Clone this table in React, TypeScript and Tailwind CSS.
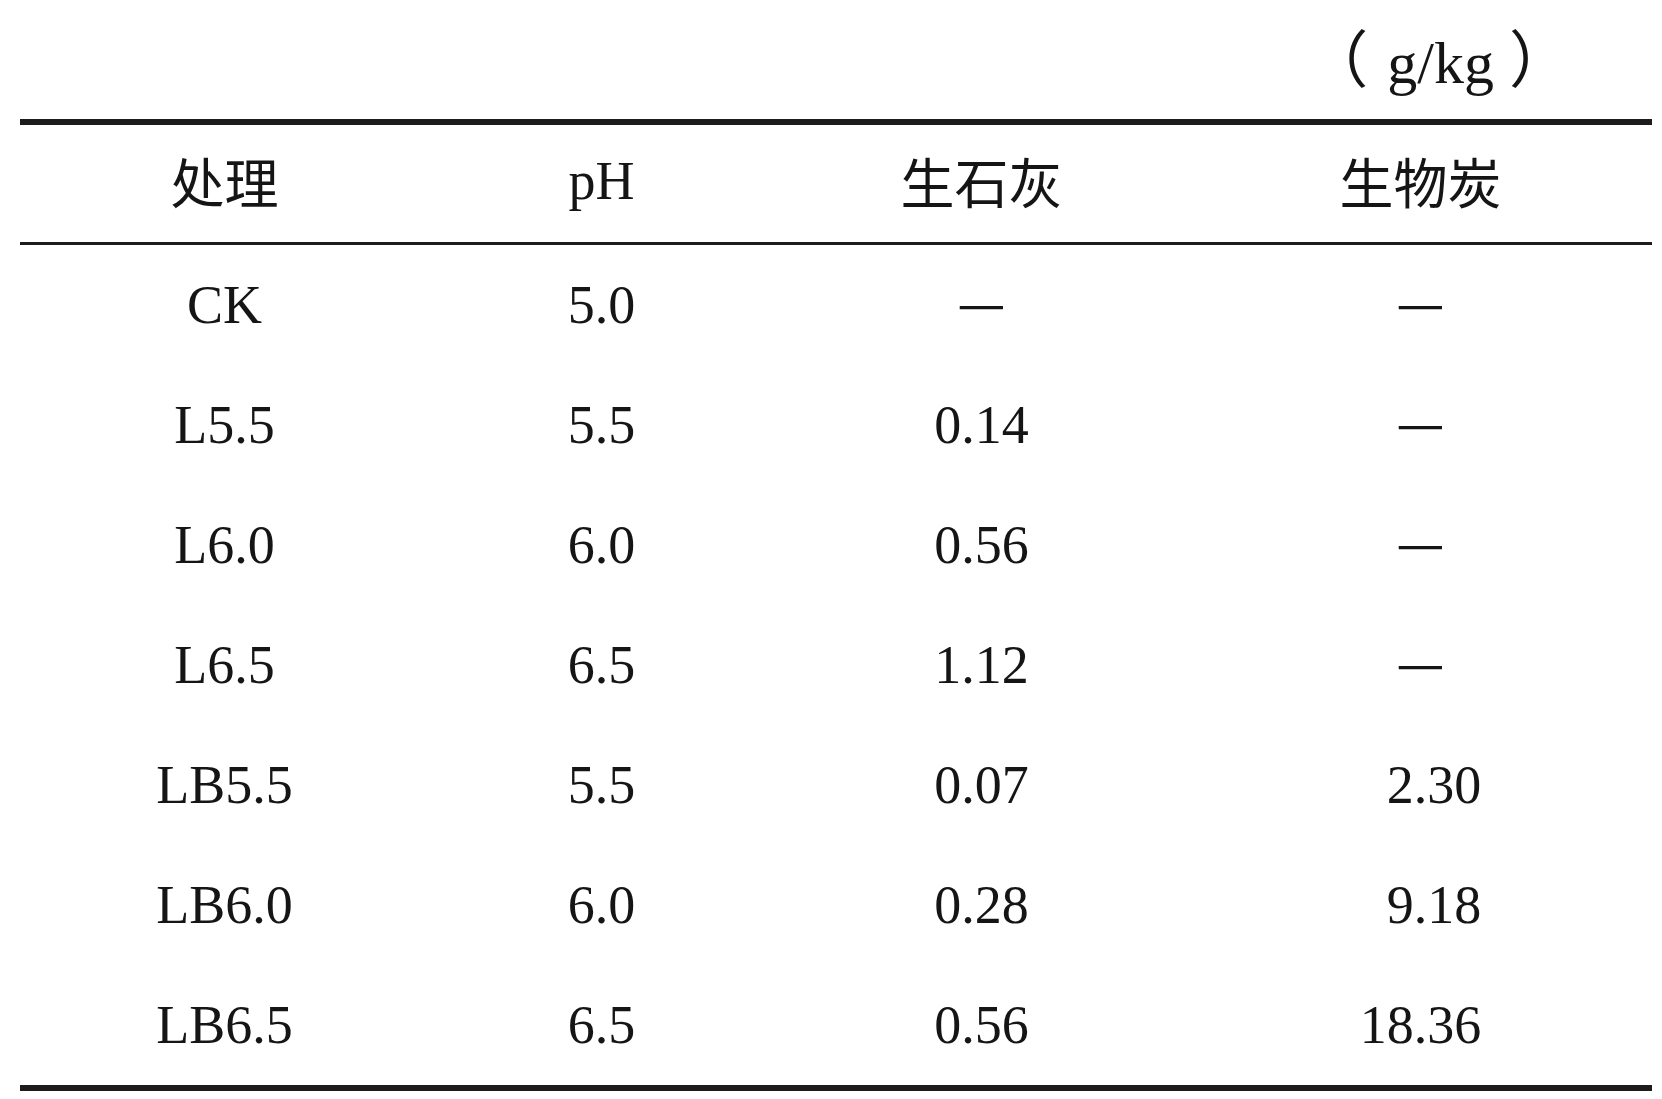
const rows: [string, string, string, string][] = [
  ['CK', '5.0', '—', '—'],
  ['L5.5', '5.5', '0.14', '—'],
  ['L6.0', '6.0', '0.56', '—'],
  ['L6.5', '6.5', '1.12', '—'],
  ['LB5.5', '5.5', '0.07', '2.30'],
  ['LB6.0', '6.0', '0.28', '9.18'],
  ['LB6.5', '6.5', '0.56', '18.36'],
];

const cols = 'grid grid-cols-[409px_345px_415px_463px]';

function Cell({ value, pad = false }: { value: string; pad?: boolean }) {
  if (value === '—') {
    return (
      <div className="flex items-center justify-center pb-[11px]">
        <span className="font-['Noto_Sans_CJK_SC',sans-serif] leading-none">—</span>
      </div>
    );
  }
  return (
    <div className="flex items-center justify-center">
      <span className={pad && value.length < 5 ? 'pl-[0.5em] leading-none' : 'leading-none'}>{value}</span>
    </div>
  );
}

export default function App() {
  return (
    <div className="w-[1662px] h-[1099px] bg-white text-[#151515] font-['Liberation_Serif','Noto_Sans_CJK_SC',serif] text-[54px]">
      <div className="ml-[20px] w-[1632px]">
        {/* unit label */}
        <div className="h-[119px] flex items-end justify-end pr-[81px] pb-[26px]">
          <span className="leading-none">
            <span className="font-['Noto_Sans_CJK_SC',sans-serif] text-[62px]">（</span>
            <span className="pl-[4px] text-[60px]"> g/kg </span>
            <span className="font-['Noto_Sans_CJK_SC',sans-serif] text-[62px]">）</span>
          </span>
        </div>

        {/* header */}
        <div className={`${cols} h-[126px] border-t-[6px] border-b-[3px] border-[#1c1c1c]`}>
          <div className="flex items-center justify-center pb-[6px]">
            <span className="font-['Noto_Sans_CJK_SC',sans-serif] leading-none">处理</span>
          </div>
          <div className="flex items-center justify-center pb-[6px]">
            <span className="leading-none">pH</span>
          </div>
          <div className="flex items-center justify-center pb-[6px]">
            <span className="font-['Noto_Sans_CJK_SC',sans-serif] leading-none">生石灰</span>
          </div>
          <div className="flex items-center justify-center pb-[6px]">
            <span className="font-['Noto_Sans_CJK_SC',sans-serif] leading-none">生物炭</span>
          </div>
        </div>

        {/* body */}
        <div className="border-b-[6px] border-[#1c1c1c]">
          {rows.map((r) => (
            <div key={r[0]} className={`${cols} h-[120px]`}>
              <Cell value={r[0]} />
              <Cell value={r[1]} />
              <Cell value={r[2]} />
              <Cell value={r[3]} pad />
            </div>
          ))}
        </div>
      </div>
    </div>
  );
}
